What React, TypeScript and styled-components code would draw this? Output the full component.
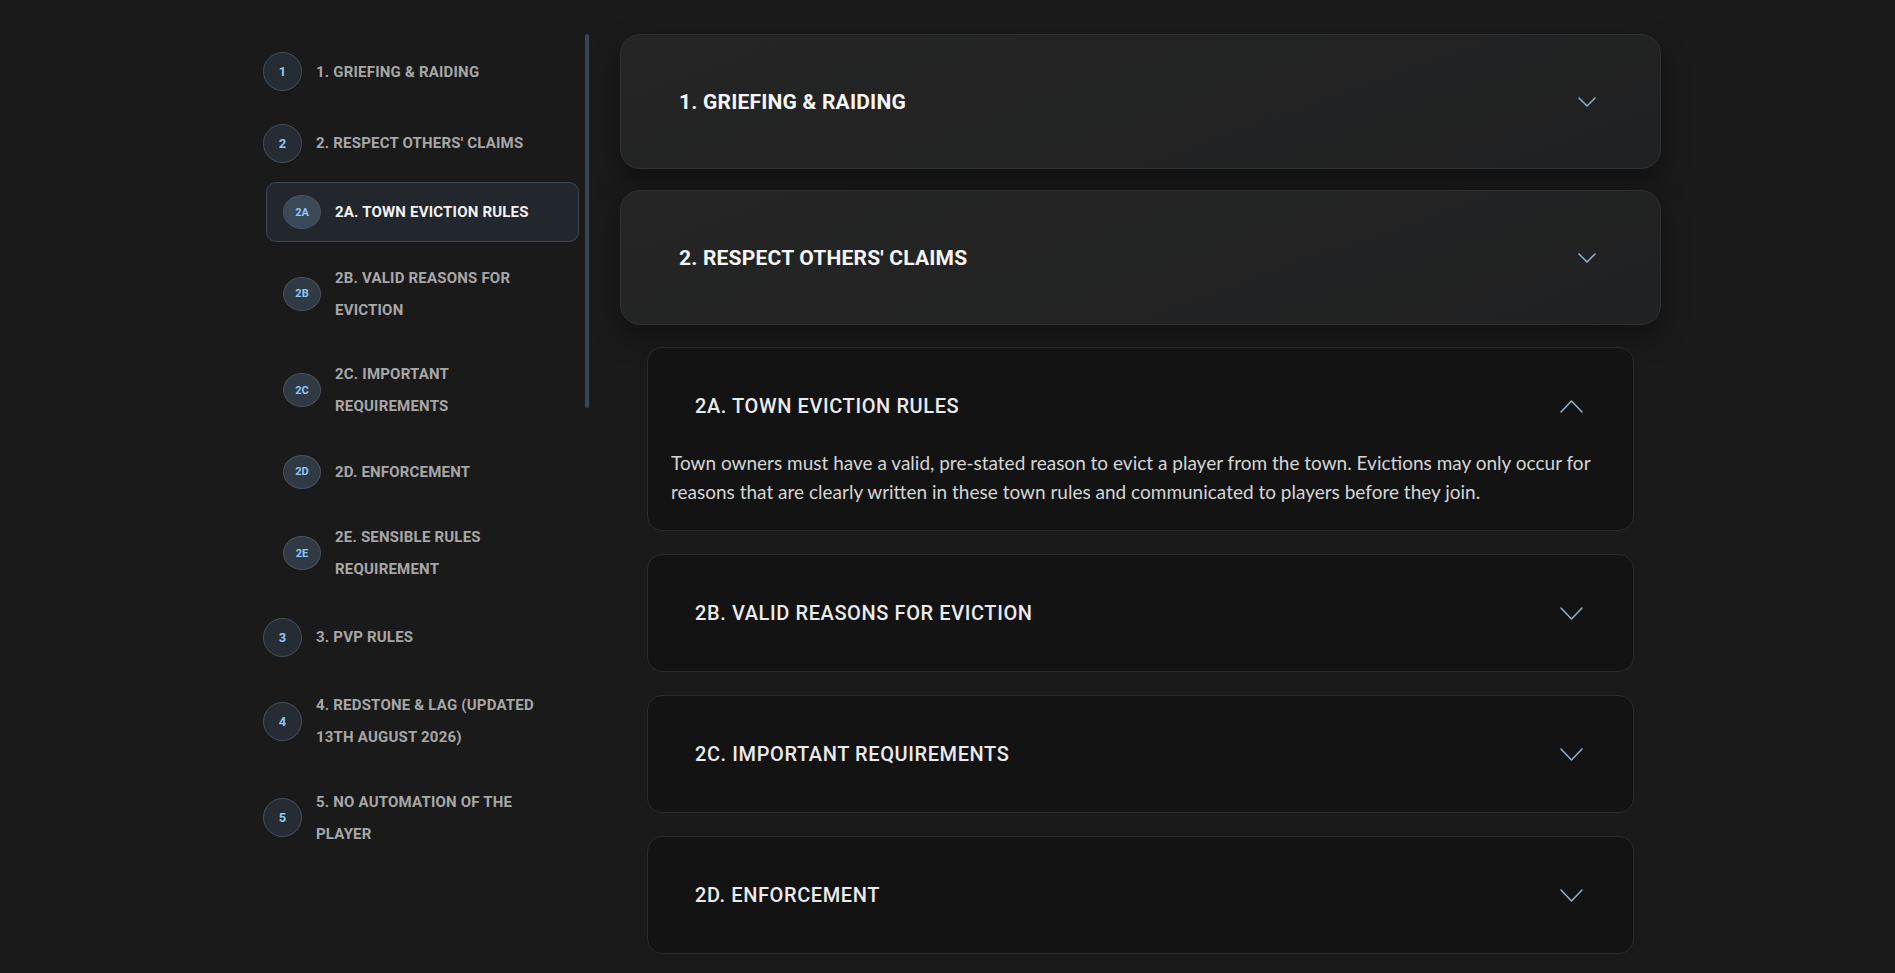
import styled, { createGlobalStyle } from "styled-components"

type NavEntry = {
    badge: string,
    label: string,
    sub?: boolean,
    active?: boolean
}

type SubRule = {
    title: string,
    body?: string,
    open?: boolean
}

const navEntries: NavEntry[] = [
    { badge: '1', label: '1. GRIEFING & RAIDING' },
    { badge: '2', label: "2. RESPECT OTHERS' CLAIMS" },
    { badge: '2A', label: '2A. TOWN EVICTION RULES', sub: true, active: true },
    { badge: '2B', label: '2B. VALID REASONS FOR\nEVICTION', sub: true },
    { badge: '2C', label: '2C. IMPORTANT\nREQUIREMENTS', sub: true },
    { badge: '2D', label: '2D. ENFORCEMENT', sub: true },
    { badge: '2E', label: '2E. SENSIBLE RULES\nREQUIREMENT', sub: true },
    { badge: '3', label: '3. PVP RULES' },
    { badge: '4', label: '4. REDSTONE & LAG (UPDATED\n13TH AUGUST 2026)' },
    { badge: '5', label: '5. NO AUTOMATION OF THE\nPLAYER' },
]

const subRules: SubRule[] = [
    {
        title: '2A. TOWN EVICTION RULES',
        open: true,
        body: 'Town owners must have a valid, pre-stated reason to evict a player from the town. Evictions may only occur for reasons that are clearly written in these town rules and communicated to players before they join.'
    },
    { title: '2B. VALID REASONS FOR EVICTION' },
    { title: '2C. IMPORTANT REQUIREMENTS' },
    { title: '2D. ENFORCEMENT' },
]

function Chevron({ up, large }: Readonly<{ up?: boolean, large?: boolean }>) {
    const w = large ? 23 : 18
    const h = large ? 13 : 10
    return (
        <StyledChevron width={w} height={h} viewBox={`0 0 ${w} ${h}`} $up={up}>
            <polyline points={`1,1 ${w / 2},${h - 1} ${w - 1},1`} />
        </StyledChevron>
    )
}

function App() {
    return (
        <>
            <GlobalStyle/>
            <Page>
                <Sidebar>
                    <NavList>
                        {navEntries.map(entry => (
                            <NavItem key={entry.badge} $sub={entry.sub} $active={entry.active}>
                                <Badge $sub={entry.sub} $active={entry.active}>{entry.badge}</Badge>
                                <NavLabel $active={entry.active}>{entry.label}</NavLabel>
                            </NavItem>
                        ))}
                    </NavList>
                    <ScrollRail/>
                </Sidebar>
                <Main>
                    <RuleCard>
                        <RuleTitle>1. GRIEFING &amp; RAIDING</RuleTitle>
                        <Chevron/>
                    </RuleCard>
                    <RuleCard>
                        <RuleTitle>2. RESPECT OTHERS' CLAIMS</RuleTitle>
                        <Chevron/>
                    </RuleCard>
                    <SubList>
                        {subRules.map(rule => (
                            <SubCard key={rule.title}>
                                <SubHeader $open={rule.open}>
                                    <SubTitle>{rule.title}</SubTitle>
                                    <Chevron large up={rule.open}/>
                                </SubHeader>
                                {rule.open && <SubBody>{rule.body}</SubBody>}
                            </SubCard>
                        ))}
                    </SubList>
                </Main>
            </Page>
        </>
    )
}

const GlobalStyle = createGlobalStyle`
    html, body {
        margin: 0;
        background: #1a1a1a;
    }
    body {
        font-family: Roboto, "Liberation Sans", sans-serif;
        color: #dcdcdc;
        overflow: hidden;
    }
`

const Page = styled.div`
    box-sizing: border-box;
    width: 1427px;
    margin: 0 auto;
    padding: 34px 0 0 12px;
    display: flex;
    align-items: flex-start;
    gap: 31px;
`

const Sidebar = styled.aside`
    display: flex;
    gap: 6px;
    flex-shrink: 0;
`

const NavList = styled.nav`
    width: 333px;
    padding-top: 5px;
    display: flex;
    flex-direction: column;
    gap: 6.5px;
`

const NavItem = styled.div<{ $sub?: boolean, $active?: boolean }>`
    display: flex;
    align-items: center;
    gap: 14px;
    padding: 12px 16px;
    margin-left: ${({ $sub }) => $sub ? '20px' : '0'};
    border: 1px solid ${({ $active }) => $active ? '#3c4753' : 'transparent'};
    border-radius: 10px;
    background: ${({ $active }) => $active ? '#22272d' : 'transparent'};
`

const Badge = styled.span<{ $sub?: boolean, $active?: boolean }>`
    box-sizing: border-box;
    flex-shrink: 0;
    width: ${({ $sub }) => $sub ? '38px' : '39px'};
    height: ${({ $sub }) => $sub ? '34px' : '39px'};
    border-radius: 50%;
    border: 1px solid #45525f;
    background: ${({ $sub, $active }) => $active ? '#3a4857' : $sub ? '#2f3a45' : '#252c33'};
    color: #92c6f8;
    display: flex;
    align-items: center;
    justify-content: center;
    font-size: ${({ $sub }) => $sub ? '11px' : '13px'};
    font-weight: 700;
`

const NavLabel = styled.span<{ $active?: boolean }>`
    font-size: 15px;
    font-weight: 700;
    line-height: 32px;
    letter-spacing: 0.2px;
    white-space: pre-line;
    color: ${({ $active }) => $active ? '#f2f2f2' : '#a7a7a7'};
`

const ScrollRail = styled.div`
    width: 4px;
    height: 374px;
    border-radius: 2px;
    background: #384451;
`

const Main = styled.main`
    width: 1041px;
    display: flex;
    flex-direction: column;
    gap: 21px;
`

const RuleCard = styled.section`
    box-sizing: border-box;
    height: 135px;
    padding: 0 64px 0 58px;
    display: flex;
    align-items: center;
    justify-content: space-between;
    border: 1px solid #303030;
    border-radius: 20px;
    background: linear-gradient(160deg, #252525 0%, #202122 100%);
    box-shadow: 0 12px 28px rgba(0, 0, 0, 0.35);
`

const RuleTitle = styled.h2`
    margin: 0;
    font-size: 21px;
    font-weight: 700;
    letter-spacing: 0.2px;
    color: #f5f5f5;
`

const SubList = styled.div`
    padding: 1px 27px 0;
    display: flex;
    flex-direction: column;
    gap: 23px;
`

const SubCard = styled.article`
    border: 1px solid #2b2b2b;
    border-radius: 15px;
    background: #131313;
`

const SubHeader = styled.div<{ $open?: boolean }>`
    box-sizing: border-box;
    height: ${({ $open }) => $open ? '100px' : '116px'};
    padding: ${({ $open }) => $open ? '40px 50px 24px 47px' : '0 50px 0 47px'};
    display: flex;
    align-items: center;
    justify-content: space-between;
`

const SubTitle = styled.h3`
    margin: 0;
    font-size: 20px;
    font-weight: 500;
    letter-spacing: 0.6px;
    line-height: 36px;
    color: #ebebeb;
`

const SubBody = styled.p`
    margin: 0;
    padding: 0 23px 24px;
    font-family: Lato, "Open Sans", sans-serif;
    font-size: 19px;
    line-height: 29px;
    color: #d5d5d5;
`

const StyledChevron = styled.svg<{ $up?: boolean }>`
    flex-shrink: 0;
    fill: none;
    stroke: #8db4d6;
    stroke-width: 1.5;
    stroke-linecap: round;
    stroke-linejoin: round;
    transform: ${({ $up }) => $up ? 'rotate(180deg)' : 'none'};
`

export default App
